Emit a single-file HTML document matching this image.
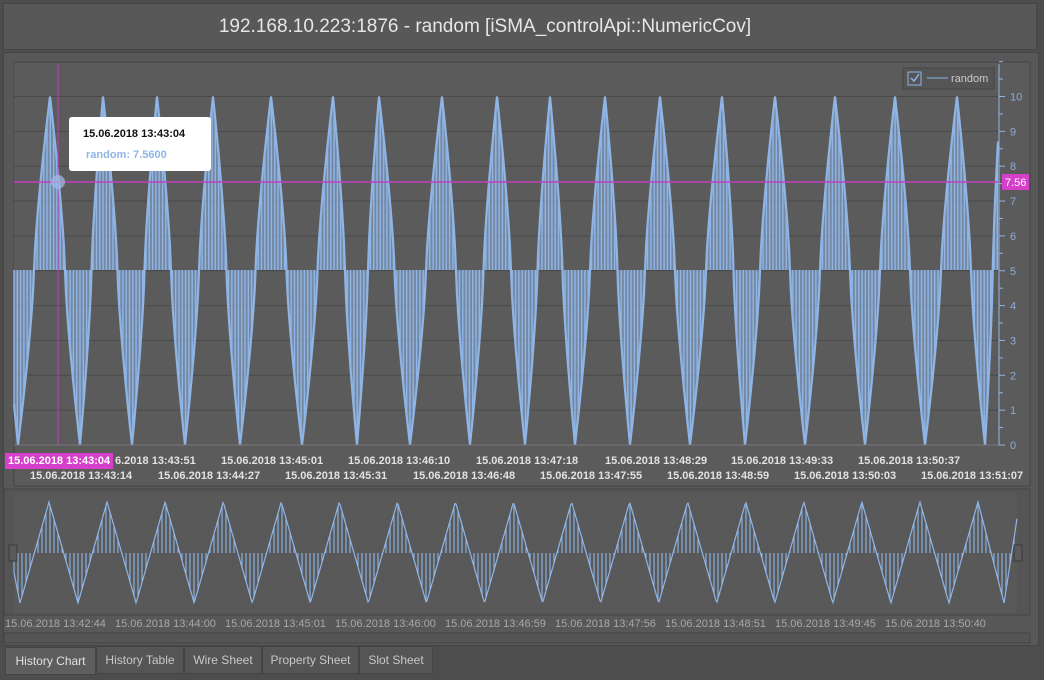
<!DOCTYPE html>
<html><head><meta charset="utf-8"><style>
html,body{margin:0;padding:0;width:1044px;height:680px;overflow:hidden;background:#4d4d4d;font-family:"Liberation Sans",sans-serif}
.abs{position:absolute}
#title{left:3px;top:3px;width:1034px;height:47px;background:#585858;border:1px solid #454545;color:#e6e6e6;font-size:19px;text-align:center;line-height:46px;box-sizing:border-box;padding-right:70px}
#panel{left:3px;top:52px;width:1034px;height:592px;background:#585858;border:1px solid #444}
.tl{position:absolute;font-size:11px;color:#e2e2e2;font-weight:bold;white-space:nowrap}
.ol{position:absolute;font-size:11px;color:#a8a8a8;white-space:nowrap;top:618px}
.tab{position:absolute;top:646px;height:26px;line-height:26px;font-size:12px;color:#c8c8c8;background:#555;border:1px solid #444;text-align:center}
</style></head><body>
<div id="title" class="abs">192.168.10.223:1876 - random [iSMA_controlApi::NumericCov]</div>
<div id="panel" class="abs"></div>
<svg class="abs" style="left:0;top:0" width="1044" height="680" id="sv">
<rect x="14" y="62" width="1016" height="424" fill="#5b5b5b" stroke="#444"/>
<rect x="14" y="64" width="985" height="381" fill="#5b5b5b"/>
<g id="grid" stroke="#4a4a4a" stroke-width="1"></g>
<g id="main"></g>
<line x1="58" y1="64" x2="58" y2="445" stroke="#c040c0" stroke-width="1"/>
<line x1="14" y1="182" x2="999" y2="182" stroke="#c040c0" stroke-width="1.5"/>
<circle cx="58" cy="182" r="7" fill="#9fbfe8" opacity="0.7"/>
<line x1="999" y1="64" x2="999" y2="445" stroke="#8fb5e6"/>
<line x1="14" y1="445" x2="999" y2="445" stroke="#777"/>
<g id="yt" stroke="#8fb5e6"></g>
<g id="yl" fill="#8aacd8" font-size="11" font-family="Liberation Sans"></g>
<rect x="1002" y="174" width="27" height="16" fill="#d63fc9"/>
<text x="1005" y="186" fill="#fff" font-size="11" font-family="Liberation Sans">7.56</text>
<rect x="903" y="68" width="91" height="21" fill="#555" stroke="#444"/>
<rect x="908" y="72" width="13" height="13" fill="none" stroke="#8fb5e6"/>
<path d="M911 78 L914 81 L919 74" stroke="#8fb5e6" fill="none" stroke-width="1.5"/>
<line x1="927" y1="78" x2="948" y2="78" stroke="#8fb5e6"/>
<text x="951" y="82" fill="#ccc" font-size="11" font-family="Liberation Sans">random</text>
<rect x="69" y="117" width="142" height="54" rx="3" fill="#fff"/>
<text x="83" y="137" fill="#111" font-size="11" font-weight="bold" font-family="Liberation Sans">15.06.2018 13:43:04</text>
<text x="86" y="158" fill="#8fb5e6" font-size="11" font-weight="bold" font-family="Liberation Sans">random: 7.5600</text>
<rect x="5" y="453" width="108" height="16" fill="#d63fc9"/>
<rect x="4" y="489" width="1026" height="126" fill="#555" stroke="#444"/>
<rect x="14" y="493" width="1003" height="120" fill="#5a5a5a"/>
<g id="ov"></g>
<rect x="9" y="545" width="8" height="16" fill="#5a5a5a" stroke="#3a3a3a"/>
<rect x="1014" y="545" width="8" height="16" fill="#5a5a5a" stroke="#3a3a3a"/>
<rect x="4" y="633" width="1026" height="10" fill="#555" stroke="#444"/>
</svg>
<div class="tl" style="left:8px;top:455px;color:#fff">15.06.2018 13:43:04</div>
<div class="tl" style="left:115px;top:455px">6.2018 13:43:51</div>
<div class="tl" style="left:221px;top:455px">15.06.2018 13:45:01</div>
<div class="tl" style="left:348px;top:455px">15.06.2018 13:46:10</div>
<div class="tl" style="left:476px;top:455px">15.06.2018 13:47:18</div>
<div class="tl" style="left:605px;top:455px">15.06.2018 13:48:29</div>
<div class="tl" style="left:731px;top:455px">15.06.2018 13:49:33</div>
<div class="tl" style="left:858px;top:455px">15.06.2018 13:50:37</div>
<div class="tl" style="left:30px;top:470px">15.06.2018 13:43:14</div>
<div class="tl" style="left:158px;top:470px">15.06.2018 13:44:27</div>
<div class="tl" style="left:285px;top:470px">15.06.2018 13:45:31</div>
<div class="tl" style="left:413px;top:470px">15.06.2018 13:46:48</div>
<div class="tl" style="left:540px;top:470px">15.06.2018 13:47:55</div>
<div class="tl" style="left:667px;top:470px">15.06.2018 13:48:59</div>
<div class="tl" style="left:794px;top:470px">15.06.2018 13:50:03</div>
<div class="tl" style="left:921px;top:470px">15.06.2018 13:51:07</div>
<div class="ol" style="left:5px">15.06.2018 13:42:44</div>
<div class="ol" style="left:115px">15.06.2018 13:44:00</div>
<div class="ol" style="left:225px">15.06.2018 13:45:01</div>
<div class="ol" style="left:335px">15.06.2018 13:46:00</div>
<div class="ol" style="left:445px">15.06.2018 13:46:59</div>
<div class="ol" style="left:555px">15.06.2018 13:47:56</div>
<div class="ol" style="left:665px">15.06.2018 13:48:51</div>
<div class="ol" style="left:775px">15.06.2018 13:49:45</div>
<div class="ol" style="left:885px">15.06.2018 13:50:40</div>
<div class="tab" style="left:5px;width:89px;background:#5e5e5e;color:#e0e0e0;top:647px;height:26px">History Chart</div>
<div class="tab" style="left:96px;width:86px">History Table</div>
<div class="tab" style="left:184px;width:76px">Wire Sheet</div>
<div class="tab" style="left:262px;width:95px">Property Sheet</div>
<div class="tab" style="left:359px;width:72px">Slot Sheet</div>
<script>
var NS="http://www.w3.org/2000/svg";
function el(p,t,a){var e=document.createElementNS(NS,t);for(var k in a)e.setAttribute(k,a[k]);p.appendChild(e);return e;}
var grid=document.getElementById('grid'),yt=document.getElementById('yt'),yl=document.getElementById('yl');
function Y(v){return 445-v*34.85;}
for(var v=0;v<=10;v++){var y=Y(v);el(grid,'line',{x1:14,x2:999,y1:y,y2:y});el(yt,'line',{x1:999,x2:1005,y1:y,y2:y});var t=el(yl,'text',{x:1010,y:y+4});t.textContent=v;
 if(v<10){el(yt,'line',{x1:999,x2:1003,y1:Y(v+0.5),y2:Y(v+0.5)});}}
el(yt,'line',{x1:999,x2:1003,y1:Y(10.5),y2:Y(10.5)});el(yt,'line',{x1:999,x2:1003,y1:Y(11),y2:Y(11)});
var tr=[18,80,132,185,240,302,357,410,470,525,575,630,690,745,805,865,925,985];
var pk=[50,103,157,213,271,333,379,442,497,550,605,660,722,775,835,895,957];
var pts=[[14,1.5]];
for(var i=0;i<tr.length;i++){pts.push([tr[i],0]);if(i<pk.length)pts.push([pk[i],10]);}
pts.push([999,9]);
function lin(x,P){for(var i=0;i<P.length-1;i++){if(x>=P[i][0]&&x<=P[i+1][0]){var f=(x-P[i][0])/(P[i+1][0]-P[i][0]);return P[i][1]+f*(P[i+1][1]-P[i][1]);}}return 5;}
function val(x,P){var v=lin(x,P);var f=(v-5)/5;var s=f<0?-1:1;return 5+5*s*Math.pow(Math.abs(f),0.75);}
function draw(g,P,x0,x1,Yf,mid,step,sw){
 var d="M"+x0+" "+mid;var s="";
 for(var x=x0;x<=x1;x+=1){d+=" L"+x+" "+Yf(val(x,P)).toFixed(1);}
 d+=" L"+x1+" "+mid+" Z";
 el(g,'path',{d:d,fill:'#8fb5e6','fill-opacity':'0.5',stroke:'none'});
 var o="";for(var x=x0;x<=x1;x+=1){o+=(x==x0?"M":"L")+x+" "+Yf(val(x,P)).toFixed(1)+" ";}
 el(g,'path',{d:o,fill:'none',stroke:'#8fb5e6','stroke-width':sw});
 for(var x=x0;x<=x1;x+=step){s+="M"+x+" "+mid+" V"+Yf(val(x,P)).toFixed(1)+" ";}
 el(g,'path',{d:s,stroke:'#8fb5e6','stroke-width':1.4,fill:'none'});
}
draw(document.getElementById('main'),pts,14,998,Y,270,3.3,2.2);
var op=[],ot=[];var sp=(978-49)/16;
for(var i=0;i<17;i++){op.push(49+i*sp);}
var P2=[[14,3],[20,0]];for(var i=0;i<17;i++){P2.push([op[i],10]);P2.push([op[i]+sp/2-(i==16?3:0),0]);}P2.push([1018,9]);
function Y2(v){return 603-v*10.1;}
var og=document.getElementById('ov');
for(var x=14;x<1017;x+=3)el(og,'line',{x1:x,x2:x,y1:493,y2:613,stroke:'#555','stroke-width':1});
function val2(x){return lin(x,P2);}
(function(){var g=og,d="",s="";for(var x=14;x<=1017;x++){d+=(x==14?"M":"L")+x+" "+Y2(val2(x)).toFixed(1)+" ";}
el(g,'path',{d:d,fill:'none',stroke:'#8fb5e6','stroke-width':1.2});
for(var x=14;x<=1017;x+=4){s+="M"+x+" 553 V"+Y2(val2(x)).toFixed(1)+" ";}
el(g,'path',{d:s,stroke:'#8fb5e6','stroke-width':1.1,fill:'none'});})();
</script>
</body></html>
